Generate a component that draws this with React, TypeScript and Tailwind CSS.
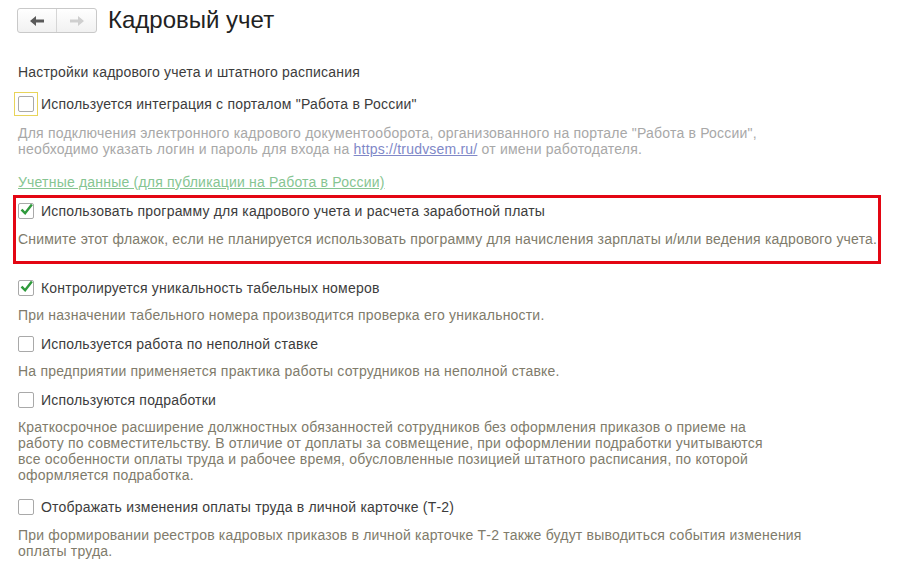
import React from "react";

const font = { fontFamily: '"Liberation Sans", Arial, sans-serif' };

function Arrow({ dir, color }: { dir: "left" | "right"; color: string }) {
  return (
    <svg width="14" height="10" viewBox="0 0 14 10" style={{ transform: dir === "right" ? "scaleX(-1)" : undefined }}>
      <path d="M0 5 L6 0 L6 3.5 L14 3.5 L14 6.5 L6 6.5 L6 10 Z" fill={color} />
    </svg>
  );
}

function Check({ checked }: { checked?: boolean }) {
  return (
    <div className="w-4 h-4 rounded-[2px] border border-[#a9a9a9] bg-white flex items-center justify-center shrink-0">
      {checked && (
        <svg width="14" height="14" viewBox="0 0 14 14" className="-mt-[3px] ml-[1px]">
          <path d="M2.5 7.5 L5.5 10.5 L12 2" fill="none" stroke="#2f9a3c" strokeWidth="2.6" strokeLinecap="square" />
        </svg>
      )}
    </div>
  );
}

function Row({ checked, label }: { checked?: boolean; label: string }) {
  return (
    <div className="flex items-center h-5 gap-[7px]">
      <Check checked={checked} />
      <span className="text-[14px] tracking-[0.2px] leading-4 text-[#3c3c3c]">{label}</span>
    </div>
  );
}

function Desc({ children, className = "" }: { children: React.ReactNode; className?: string }) {
  return <div className={"text-[14px] tracking-[0.2px] leading-4 text-[#807b6b] whitespace-nowrap " + className}>{children}</div>;
}

export default function App() {
  return (
    <div className="w-[899px] h-[579px] bg-white overflow-hidden px-[18px]" style={font}>
      {/* шапка */}
      <div className="flex items-center pt-2 h-[33px]">
        <div className="flex h-[25px] -ml-px border border-[#c9c9c9] rounded-[3px] bg-gradient-to-b from-white to-[#f1f1f1]">
          <div className="w-[39px] flex items-center justify-center border-r border-[#d6d6d6]">
            <Arrow dir="left" color="#5a5a5a" />
          </div>
          <div className="w-[39px] flex items-center justify-center">
            <Arrow dir="right" color="#cfcfcf" />
          </div>
        </div>
        <h1 className="ml-[11px] text-[24px] leading-6 text-[#222] -mt-px">Кадровый учет</h1>
      </div>

      <div className="mt-[31px] text-[14px] tracking-[0.2px] leading-4 text-[#3c3c3c]">Настройки кадрового учета и штатного расписания</div>

      <div className="mt-[14px] flex items-center h-5 gap-[7px]">
        <div className="-m-[4px] p-[3px] border border-[#e8d45a] shrink-0">
          <Check />
        </div>
        <span className="text-[14px] tracking-[0.2px] leading-4 text-[#3c3c3c]">Используется интеграция с порталом "Работа в России"</span>
      </div>
      <div className="mt-[11px] text-[14px] tracking-[0.2px] leading-4 text-[#a8a8a8] whitespace-nowrap">
        Для подключения электронного кадрового документооборота, организованного на портале "Работа в России",
        <br />
        необходимо указать логин и пароль для входа на <span className="underline text-[#8088c8]">https://trudvsem.ru/</span> от имени работодателя.
      </div>
      <div className="mt-[17px] text-[14px] tracking-[0.2px] leading-4 text-[#86c592] underline">Учетные данные (для публикации на Работа в России)</div>

      <div className="mt-[5px] -ml-[5px] w-[868px] border-[3px] border-[#e30613] pl-[2px] pt-[3px] pb-[14px]">
        <Row checked label="Использовать программу для кадрового учета и расчета заработной платы" />
        <Desc className="mt-[10px]">
          Снимите этот флажок, если не планируется использовать программу для начисления зарплаты и/или ведения кадрового учета.
        </Desc>
      </div>

      <div className="mt-[14px]">
        <Row checked label="Контролируется уникальность табельных номеров" />
        <Desc className="mt-[9px]">При назначении табельного номера производится проверка его уникальности.</Desc>
      </div>

      <div className="mt-[11px]">
        <Row label="Используется работа по неполной ставке" />
        <Desc className="mt-[9px]">На предприятии применяется практика работы сотрудников на неполной ставке.</Desc>
      </div>

      <div className="mt-[11px]">
        <Row label="Используются подработки" />
        <Desc className="mt-[9px]">
          Краткосрочное расширение должностных обязанностей сотрудников без оформления приказов о приеме на
          <br />
          работу по совместительству. В отличие от доплаты за совмещение, при оформлении подработки учитываются
          <br />
          все особенности оплаты труда и рабочее время, обусловленные позицией штатного расписания, по которой
          <br />
          оформляется подработка.
        </Desc>
      </div>

      <div className="mt-[14px]">
        <Row label="Отображать изменения оплаты труда в личной карточке (Т-2)" />
        <Desc className="mt-[10px]">
          При формировании реестров кадровых приказов в личной карточке Т-2 также будут выводиться события изменения
          <br />
          оплаты труда.
        </Desc>
      </div>
    </div>
  );
}
